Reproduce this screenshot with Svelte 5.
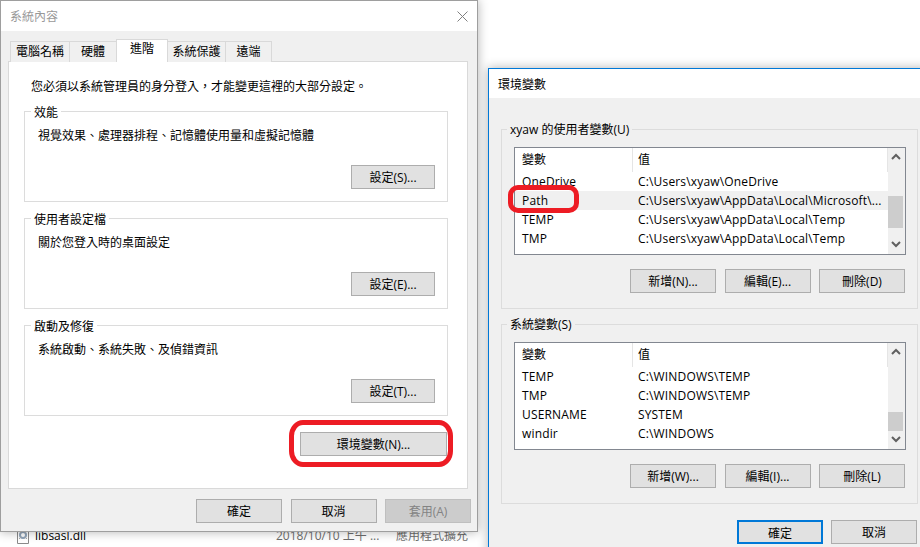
<script>
  const tabs = [
    { label: '電腦名稱', width: 60 },
    { label: '硬體', width: 48 },
    { label: '進階', width: 52, active: true },
    { label: '系統保護', width: 59 },
    { label: '遠端', width: 47 }
  ];

  const groups = [
    { title: '效能', desc: '視覺效果、處理器排程、記憶體使用量和虛擬記憶體', btn: '設定(S)...' },
    { title: '使用者設定檔', desc: '關於您登入時的桌面設定', btn: '設定(E)...' },
    { title: '啟動及修復', desc: '系統啟動、系統失敗、及偵錯資訊', btn: '設定(T)...' }
  ];

  const envLists = [
    {
      title: 'xyaw 的使用者變數(U)',
      rows: [
        ['OneDrive', 'C:\\Users\\xyaw\\OneDrive'],
        ['Path', 'C:\\Users\\xyaw\\AppData\\Local\\Microsoft\\...'],
        ['TEMP', 'C:\\Users\\xyaw\\AppData\\Local\\Temp'],
        ['TMP', 'C:\\Users\\xyaw\\AppData\\Local\\Temp']
      ],
      selected: 1,
      thumbTop: 30,
      thumbHeight: 32,
      buttons: ['新增(N)...', '編輯(E)...', '刪除(D)']
    },
    {
      title: '系統變數(S)',
      rows: [
        ['TEMP', 'C:\\WINDOWS\\TEMP'],
        ['TMP', 'C:\\WINDOWS\\TEMP'],
        ['USERNAME', 'SYSTEM'],
        ['windir', 'C:\\WINDOWS']
      ],
      selected: -1,
      thumbTop: 51,
      thumbHeight: 19,
      buttons: ['新增(W)...', '編輯(I)...', '刪除(L)']
    }
  ];
</script>

<div class="desktop" lang="zh-Hant">
  <div class="files">
    <svg class="file-icon" width="12" height="16" viewBox="0 0 12 16">
      <path d="M0.5 0.5h11v15h-11z" fill="#fff" stroke="#8a8a8a" />
      <circle cx="6" cy="7" r="3" fill="none" stroke="#8fa3b8" stroke-width="2" />
      <path d="M2 3l2 2M8 9l2 2M10 3l-2 2M4 9l-2 2" stroke="#a9a9a9" />
    </svg>
    <span class="file-name">libsasl.dll</span>
    <span class="file-date">2018/10/10 上午 ...</span>
    <span class="file-type">應用程式擴充</span>
  </div>

  <div class="window props">
    <div class="titlebar inactive">
      <span>系統內容</span>
      <svg class="close" width="11" height="11" viewBox="0 0 11 11">
        <path d="M0.5 0.5l10 10M10.5 0.5l-10 10" stroke="#808080" stroke-width="1" fill="none" />
      </svg>
    </div>
    <div class="body">
      <div class="tabs">
        {#each tabs as tab}
          <div class="tab" class:active={tab.active} style="width: {tab.width}px">{tab.label}</div>
        {/each}
      </div>
      <div class="panel">
        <p class="intro">您必須以系統管理員的身分登入，才能變更這裡的大部分設定。</p>
        {#each groups as group}
          <section class="group">
            <div class="legend">{group.title}</div>
            <p class="desc">{group.desc}</p>
            <div class="group-action">
              <button class="btn wide">{group.btn}</button>
            </div>
          </section>
        {/each}
        <div class="env-action">
          <button class="btn env">環境變數(N)...</button>
        </div>
      </div>
      <div class="footer">
        <button class="btn">確定</button>
        <button class="btn">取消</button>
        <button class="btn disabled">套用(A)</button>
      </div>
    </div>
  </div>

  <div class="window env-window">
    <div class="titlebar">
      <span>環境變數</span>
    </div>
    <div class="env-body">
      {#each envLists as list}
        <section class="env-group">
          <div class="legend gray">{list.title}</div>
          <div class="listbox">
            <div class="list-main">
              <div class="list-head">
                <div class="col-name">變數</div>
                <div class="col-value">值</div>
              </div>
              {#each list.rows as row, i}
                <div class="list-row" class:selected={i === list.selected}>
                  <div class="col-name">{row[0]}</div>
                  <div class="col-value">{row[1]}</div>
                </div>
              {/each}
            </div>
            <div class="scrollbar">
              <svg class="arrow" width="17" height="18" viewBox="0 0 17 18">
                <path d="M4 11l4-4 4 4" stroke="#606060" stroke-width="2" fill="none" />
              </svg>
              <div class="track">
                <div class="thumb" style="margin-top: {list.thumbTop}px; height: {list.thumbHeight}px"></div>
              </div>
              <svg class="arrow" width="17" height="18" viewBox="0 0 17 18">
                <path d="M4 6l4 4 4-4" stroke="#606060" stroke-width="2" fill="none" />
              </svg>
            </div>
          </div>
          <div class="list-actions">
            {#each list.buttons as label}
              <button class="btn">{label}</button>
            {/each}
          </div>
        </section>
      {/each}
      <div class="env-footer">
        <button class="btn primary">確定</button>
        <button class="btn">取消</button>
      </div>
    </div>
  </div>

  <div class="mark mark-env"></div>
  <div class="mark mark-path"></div>
</div>

<style>
  :global(body) {
    margin: 0;
    background: #fff;
  }

  .desktop {
    position: relative;
    width: 920px;
    height: 547px;
    overflow: hidden;
    background: #fff;
    font-family: "Open Sans", "Noto Sans CJK TC", sans-serif;
    font-size: 12px;
    color: #000;
  }

  /* explorer row peeking out under the dialog */
  .files {
    display: flex;
    align-items: center;
    height: 18px;
    padding-top: 527px;
    line-height: 18px;
  }

  .file-icon {
    margin-left: 17px;
    margin-right: 6px;
  }

  .file-name {
    width: 241px;
  }

  .file-date {
    width: 120px;
    color: #6d6d6d;
  }

  .file-type {
    color: #6d6d6d;
  }

  .window {
    position: absolute;
    box-sizing: border-box;
  }

  .props {
    left: 0;
    top: 0;
    width: 478px;
    height: 532px;
    border: 1px solid #9e9e9e;
    background: #f0f0f0;
    box-shadow: 0 0 10px rgba(0, 0, 0, 0.3);
  }

  .env-window {
    left: 488px;
    top: 68px;
    width: 440px;
    height: 490px;
    border: 1px solid #0078d7;
    background: #f0f0f0;
    box-shadow: 0 0 10px rgba(0, 0, 0, 0.3);
  }

  .titlebar {
    display: flex;
    align-items: center;
    justify-content: space-between;
    height: 29px;
    padding: 0 9px;
    background: #fff;
    line-height: 30px;
  }

  .titlebar span {
    padding-top: 2px;
  }

  .titlebar.inactive {
    height: 30px;
    color: #999;
  }

  .close {
    display: block;
  }

  .body {
    display: flex;
    flex-direction: column;
    padding-top: 9px;
  }

  .tabs {
    position: relative;
    z-index: 1;
    display: flex;
    align-items: flex-end;
    height: 22px;
    margin-bottom: -1px;
    padding-left: 9px;
  }

  .tab {
    box-sizing: border-box;
    height: 21px;
    margin-right: -1px;
    border: 1px solid #d9d9d9;
    border-bottom: none;
    background: #f0f0f0;
    text-align: center;
    line-height: 20px;
  }

  .tab.active {
    height: 23px;
    background: #fff;
    line-height: 18px;
  }

  .panel {
    box-sizing: border-box;
    width: 460px;
    height: 428px;
    margin-left: 7px;
    padding-top: 16px;
    border: 1px solid #d9d9d9;
    background: #fff;
  }

  .intro {
    margin: 0 0 15px 22px;
    line-height: 18px;
  }

  .group {
    box-sizing: border-box;
    width: 424px;
    height: 91px;
    margin: 0 0 16px 15px;
    border: 1px solid #dcdcdc;
  }

  .legend {
    display: table;
    margin: -7px 0 0 6px;
    padding: 0 3px;
    background: #fff;
    line-height: 16px;
  }

  .legend.gray {
    margin: -8px 0 0 5px;
    background: #f0f0f0;
  }

  .desc {
    margin: 6px 0 0 13px;
    line-height: 18px;
  }

  .group-action {
    display: flex;
    justify-content: flex-end;
    margin-top: 20px;
    padding-right: 12px;
  }

  .env-action {
    display: flex;
    justify-content: flex-end;
    padding-right: 20px;
  }

  .btn {
    box-sizing: border-box;
    width: 86px;
    height: 24px;
    padding: 2px 0 0;
    border: 1px solid #adadad;
    border-radius: 0;
    background: #e1e1e1;
    font: inherit;
    line-height: 20px;
    color: #000;
  }

  .btn.wide {
    width: 84px;
  }

  .btn.env {
    width: 147px;
  }

  .btn.disabled {
    border-color: #bfbfbf;
    background: #cccccc;
    color: #838383;
  }

  .btn.primary {
    border: 2px solid #0078d7;
  }

  .footer {
    display: flex;
    justify-content: flex-end;
    gap: 8.5px;
    margin-top: 10px;
    padding-right: 6px;
  }

  .env-body {
    padding: 31px 0 0 12px;
  }

  .env-group {
    box-sizing: border-box;
    width: 417px;
    height: 180px;
    margin-bottom: 15px;
    border: 1px solid #dcdcdc;
  }

  .listbox {
    display: flex;
    box-sizing: border-box;
    width: 392px;
    height: 108px;
    margin: 9px 0 0 12px;
    border: 1px solid #828790;
    background: #fff;
  }

  .list-main {
    flex: 1;
    min-width: 0;
  }

  .list-head {
    display: flex;
    height: 24px;
    line-height: 24px;
  }

  .list-head .col-name {
    border-right: 1px solid #e5e5e5;
  }

  .list-head .col-value {
    border-right: 1px solid #e5e5e5;
  }

  .list-row {
    display: flex;
    height: 19px;
    line-height: 19px;
    letter-spacing: 0.16px;
  }

  .list-row.selected {
    background: #f0f0f0;
  }

  .col-name {
    box-sizing: border-box;
    width: 118px;
    padding-left: 7px;
  }

  .col-value {
    box-sizing: border-box;
    flex: 1;
    padding-left: 5px;
    white-space: nowrap;
  }

  .scrollbar {
    display: flex;
    flex-direction: column;
    width: 17px;
    background: #f0f0f0;
  }

  .arrow {
    display: block;
    flex: none;
  }

  .track {
    flex: 1;
  }

  .thumb {
    width: 15px;
    background: #cdcdcd;
  }

  .list-actions {
    display: flex;
    justify-content: flex-end;
    gap: 8.5px;
    margin-top: 14px;
    padding-right: 12px;
  }

  .env-footer {
    display: flex;
    justify-content: flex-end;
    gap: 8px;
    width: 417px;
    margin-top: 16px;
    padding-right: 1px;
    box-sizing: border-box;
  }

  /* red hand-drawn highlights on top of the screenshot */
  .mark {
    position: absolute;
    box-sizing: border-box;
    border: 5px solid #ed1c24;
  }

  .mark-env {
    left: 289px;
    top: 420px;
    width: 164px;
    height: 47px;
    border-radius: 14px / 16px;
  }

  .mark-path {
    left: 508px;
    top: 185px;
    width: 71px;
    height: 28px;
    border-radius: 10px;
  }
</style>
